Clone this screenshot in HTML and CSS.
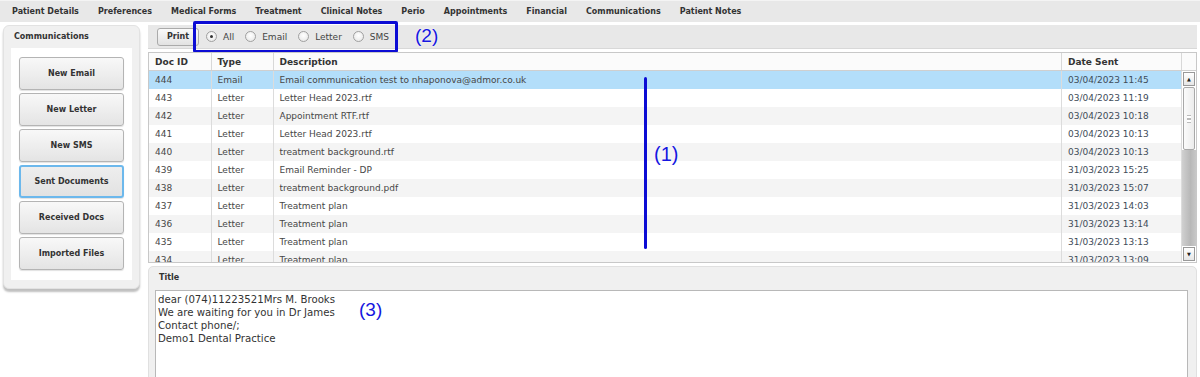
FILE: index.html
```html
<!DOCTYPE html>
<html lang="en">
<head>
    <meta charset="UTF-8">
    <title>Communications</title>
    <link rel="stylesheet" href="styles.css">
</head>
<body>
    <div class="tabs">
        <span>Patient Details</span>
        <span>Preferences</span>
        <span>Medical Forms</span>
        <span>Treatment</span>
        <span>Clinical Notes</span>
        <span>Perio</span>
        <span>Appointments</span>
        <span>Financial</span>
        <span>Communications</span>
        <span>Patient Notes</span>
    </div>

    <div class="main">
        <div class="side">
            <div class="side-title">Communications</div>
            <div class="side-inner">
                <div class="btn">New Email</div>
                <div class="btn">New Letter</div>
                <div class="btn">New SMS</div>
                <div class="btn active">Sent Documents</div>
                <div class="btn">Received Docs</div>
                <div class="btn">Imported Files</div>
            </div>
        </div>

        <div class="content">
            <div class="toolbar">
                <div class="print">Print</div>
                <label class="radio"><span class="dot on"></span>All</label>
                <label class="radio"><span class="dot"></span>Email</label>
                <label class="radio"><span class="dot"></span>Letter</label>
                <label class="radio"><span class="dot"></span>SMS</label>
                <!-- annotation (2) -->
                <div class="mark-box"></div>
                <div class="mark mark-2">(2)</div>
            </div>

            <div class="grid">
                <div class="grid-body">
                    <table>
                        <colgroup>
                            <col style="width:62px">
                            <col style="width:62px">
                            <col>
                            <col style="width:120px">
                        </colgroup>
                        <thead>
                            <tr><th>Doc ID</th><th>Type</th><th>Description</th><th>Date Sent</th></tr>
                        </thead>
                        <tbody>
                            <tr class="sel"><td>444</td><td>Email</td><td>Email communication test to nhaponova@admor.co.uk</td><td>03/04/2023 11:45</td></tr>
                            <tr><td>443</td><td>Letter</td><td>Letter Head 2023.rtf</td><td>03/04/2023 11:19</td></tr>
                            <tr><td>442</td><td>Letter</td><td>Appointment RTF.rtf</td><td>03/04/2023 10:18</td></tr>
                            <tr><td>441</td><td>Letter</td><td>Letter Head 2023.rtf</td><td>03/04/2023 10:13</td></tr>
                            <tr><td>440</td><td>Letter</td><td>treatment background.rtf</td><td>03/04/2023 10:13</td></tr>
                            <tr><td>439</td><td>Letter</td><td>Email Reminder - DP</td><td>31/03/2023 15:25</td></tr>
                            <tr><td>438</td><td>Letter</td><td>treatment background.pdf</td><td>31/03/2023 15:07</td></tr>
                            <tr><td>437</td><td>Letter</td><td>Treatment plan</td><td>31/03/2023 14:03</td></tr>
                            <tr><td>436</td><td>Letter</td><td>Treatment plan</td><td>31/03/2023 13:14</td></tr>
                            <tr><td>435</td><td>Letter</td><td>Treatment plan</td><td>31/03/2023 13:13</td></tr>
                            <tr><td>434</td><td>Letter</td><td>Treatment plan</td><td>31/03/2023 13:09</td></tr>
                        </tbody>
                    </table>
                </div>
                <div class="scroll">
                    <div class="scroll-head"></div>
                    <div class="scroll-btn">&#9650;</div>
                    <div class="thumb"><span class="grip"></span></div>
                    <div class="track"></div>
                    <div class="scroll-btn">&#9660;</div>
                </div>
                <!-- annotation (1) -->
                <div class="mark-line"></div>
                <div class="mark mark-1">(1)</div>
            </div>

            <div class="message">
                <div class="msg-title">Title</div>
                <div class="msg-body">
                    <div>dear (074)11223521Mrs M. Brooks</div>
                    <div>We are waiting for you in Dr James</div>
                    <div>Contact phone/;</div>
                    <div>Demo1 Dental Practice</div>
                    <!-- annotation (3) -->
                    <div class="mark mark-3">(3)</div>
                </div>
            </div>
        </div>
    </div>
</body>
</html>
```

FILE: styles.css
```css
body{
     margin: 0;
     background-color: #ffffff;
     font-family: "DejaVu Sans", Verdana, sans-serif;
     color: #444;
     overflow: hidden;
}
.tabs{
     display: flex;
     height: 21px;
     align-items: center;
     padding-left: 12px;
     background-color: #e8e8e8;
     border-top: 1px solid #f4f4f4;
     border-bottom: 2px solid #ffffff;
     font-size: 8px;
     font-weight: bold;
     color: #333;
}
.tabs span{
     margin-right: 19px;
}
.main{
     display: flex;
     padding-top: 1px;
}

/* left column */
.side{
     width: 137px;
     height: 264px;
     margin-left: 3px;
     background-color: #f0f0f0;
     border: 1px solid #e2e2e2;
     border-radius: 6px;
     box-shadow: 0 3px 2px rgba(0,0,0,0.25);
     box-sizing: border-box;
}
.side-title{
     height: 22px;
     line-height: 22px;
     padding-left: 10px;
     font-size: 8px;
     font-weight: bold;
     color: #333;
}
.side-inner{
     margin: 0 7px;
     height: 232px;
     padding: 9px 0 0 8px;
     box-sizing: border-box;
     background-color: #ffffff;
     display: flex;
     flex-direction: column;
     gap: 3px;
}
.btn{
     width: 105px;
     height: 33px;
     box-sizing: border-box;
     display: flex;
     align-items: center;
     justify-content: center;
     font-size: 8px;
     font-weight: bold;
     color: #333;
     border: 1px solid #b4b4b4;
     border-radius: 3px;
     background: linear-gradient(#f8f8f8, #e4e4e4);
     box-shadow: 0 1px 1px rgba(0,0,0,0.12);
}
.btn.active{
     border: 2px solid #6cb8ec;
     background: linear-gradient(#eeeeee, #e2e2e2);
}

/* right column */
.content{
     margin-left: 8px;
     width: 1049px;
     position: relative;
}
.toolbar{
     height: 23px;
     display: flex;
     align-items: center;
     padding-left: 9px;
     background-color: #e8e8e8;
     border-bottom: 1px solid #d8d8d8;
     position: relative;
     font-size: 9px;
}
.print{
     width: 42px;
     height: 18px;
     box-sizing: border-box;
     display: flex;
     align-items: center;
     justify-content: center;
     font-size: 8px;
     font-weight: bold;
     color: #333;
     border: 1px solid #aaa;
     border-radius: 3px;
     background: linear-gradient(#fafafa, #e2e2e2);
     margin-right: 7px;
}
.radio{
     display: flex;
     align-items: center;
     gap: 6px;
     margin-right: 11px;
     color: #444;
}
.dot{
     width: 11px;
     height: 11px;
     box-sizing: border-box;
     border: 1px solid #a0a0a0;
     border-radius: 50%;
     background: radial-gradient(circle at 50% 40%, #ffffff, #e4e4e4);
     display: flex;
     align-items: center;
     justify-content: center;
}
.dot.on::after{
     content: "";
     width: 3px;
     height: 3px;
     border-radius: 50%;
     background-color: #333;
}

/* document list */
.grid{
     margin-top: 3px;
     height: 211px;
     display: flex;
     border: 1px solid #c8c8c8;
     box-sizing: border-box;
     position: relative;
     background-color: #fff;
}
.grid-body{
     flex: 1;
     overflow: hidden;
}
table{
     width: 100%;
     border-collapse: collapse;
     table-layout: fixed;
     font-size: 9px;
}
th{
     height: 17px;
     padding: 0 0 0 6px;
     text-align: left;
     font-weight: bold;
     color: #333;
     background-color: #fbfbfb;
     border-right: 1px solid #d8d8d8;
     border-bottom: 1px solid #cfcfcf;
}
td{
     height: 18px;
     padding: 0 0 0 6px;
     white-space: nowrap;
     overflow: hidden;
     color: #464646;
     border-right: 1px solid #dcdcdc;
}
tbody tr:nth-child(odd){
     background-color: #f4f4f4;
}
tbody tr:nth-child(even){
     background-color: #ffffff;
}
tbody tr.sel{
     background-color: #b3defa;
}
td:last-child{
     color: #3e4c58;
}
.scroll{
     width: 14px;
     display: flex;
     flex-direction: column;
     background-color: #fff;
}
.scroll-head{
     height: 17px;
     border-bottom: 1px solid #cfcfcf;
     background-color: #fbfbfb;
}
.scroll-btn{
     height: 14px;
     margin: 1px 1px;
     box-sizing: border-box;
     border: 1px solid #999;
     background: linear-gradient(#ffffff, #e6e6e6);
     font-size: 5px;
     line-height: 12px;
     text-align: center;
     color: #222;
}
.thumb{
     height: 63px;
     margin: 0 1px;
     box-sizing: border-box;
     border: 1px solid #a8a8a8;
     border-radius: 2px;
     background: linear-gradient(to right, #fbfbfb, #ececec);
     display: flex;
     align-items: center;
     justify-content: center;
}
.grip{
     width: 4px;
     height: 6px;
     border-top: 1px solid #bbb;
     border-bottom: 1px solid #bbb;
     background: linear-gradient(#fff 40%, #bbb 40%, #bbb 60%, #fff 60%);
}
.track{
     flex: 1;
     background: linear-gradient(to right, #d0d0d0, #b8b8b8 60%, #c8c8c8);
}

/* message preview */
.message{
     margin-top: 3px;
     height: 120px;
     background-color: #f0f0f0;
     border: 1px solid #e0e0e0;
     border-radius: 5px 5px 0 0;
     padding: 0 8px 0 6px;
     box-sizing: border-box;
}
.msg-title{
     height: 23px;
     line-height: 22px;
     padding-left: 4px;
     font-size: 8px;
     font-weight: bold;
     color: #333;
}
.msg-body{
     position: relative;
     height: 100px;
     border: 1px solid #b8b8b8;
     background-color: #fff;
     padding: 2px 0 0 2px;
     font-size: 10.2px;
     line-height: 13px;
     color: #333;
}

/* blue annotations drawn over the screenshot */
.mark{
     position: absolute;
     font-family: "Liberation Sans", Arial, sans-serif;
     color: #1616e0;
     text-shadow: 0 0 2px #fff;
}
.mark-box{
     position: absolute;
     left: 45px;
     top: -4px;
     width: 205px;
     height: 32px;
     box-sizing: border-box;
     border: 3px solid #0c0cd4;
     border-radius: 2px;
}
.mark-2{
     left: 267px;
     top: 0;
     font-size: 19px;
}
.mark-line{
     position: absolute;
     left: 495px;
     top: 24px;
     width: 3px;
     height: 172px;
     border-radius: 2px;
     background-color: #0c0cd4;
}
.mark-1{
     left: 505px;
     top: 90px;
     font-size: 20px;
}
.mark-3{
     left: 203px;
     top: 12px;
     font-size: 19px;
}
```
